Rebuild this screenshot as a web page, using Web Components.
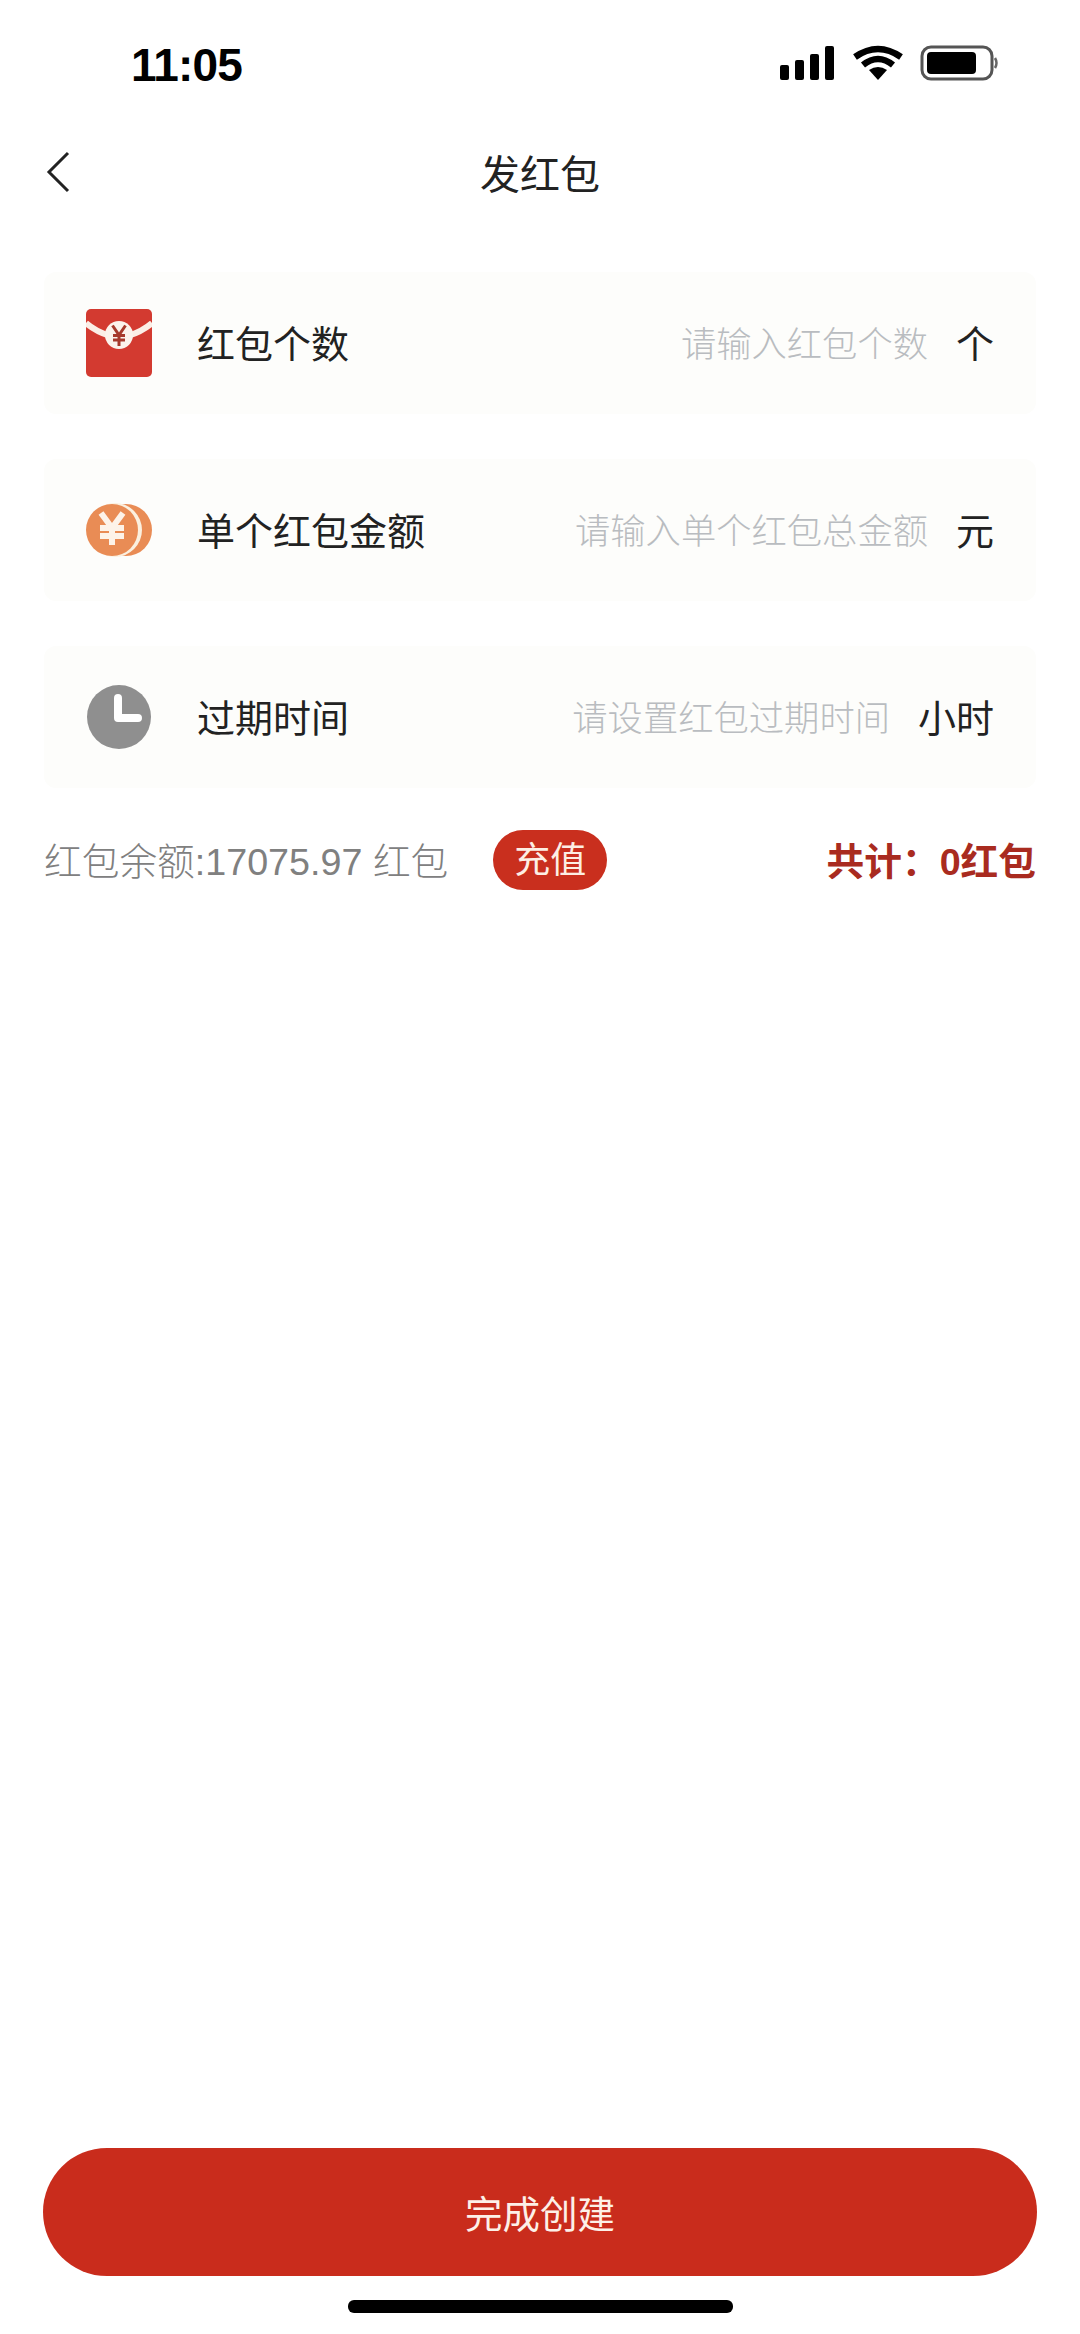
<!DOCTYPE html>
<html lang="zh">
<head>
<meta charset="utf-8">
<title>发红包</title>
<style>
    html, body {
        margin: 0;
        background: #fff;
        font-family: "Liberation Sans", "Noto Sans CJK SC", sans-serif;
    }
</style>
</head>
<body>
<send-page>
    <status-bar time="11:05" slot="top"></status-bar>
    <nav-bar slot="top">发红包</nav-bar>

    <form-row placeholder="请输入红包个数" unit="个">
        <svg slot="icon" width="66" height="68" viewBox="0 0 66 68">
            <rect width="66" height="68" rx="5" fill="#d33a30"/>
            <path d="M0 14 C8 21 15 24 24 27 M66 14 C58 21 51 24 42 27" fill="none" stroke="#fbeee6" stroke-width="6"/>
            <circle cx="33" cy="26" r="14" fill="#fbf3ec"/>
            <path d="M26.5 16.5 L33 26 L39.5 16.5 M33 26 V37 M27 26.5 H39 M27 31 H39" fill="none" stroke="#a63a2c" stroke-width="3"/>
        </svg>
        红包个数
    </form-row>
    <form-row placeholder="请输入单个红包总金额" unit="元">
        <svg slot="icon" width="66" height="54" viewBox="0 0 66 54">
            <circle cx="40" cy="27" r="26" fill="#e98c55"/>
            <circle cx="29" cy="27" r="27" fill="#fbf0df"/>
            <circle cx="26" cy="27" r="26" fill="#e98c55"/>
            <path d="M15 10 L26 25 L37 10 M26 25 V42 M14 25 H38 M14 33 H38" fill="none" stroke="#fdf3e9" stroke-width="6"/>
        </svg>
        单个红包金额
    </form-row>
    <form-row placeholder="请设置红包过期时间" unit="小时">
        <svg slot="icon" width="64" height="64" viewBox="0 0 64 64">
            <circle cx="32" cy="32" r="32" fill="#8f8f8f"/>
            <path d="M31 13 V33 H51" fill="none" stroke="#fff" stroke-width="8" stroke-linecap="round" stroke-linejoin="round"/>
        </svg>
        过期时间
    </form-row>

    <balance-row amount="红包余额:17075.97 红包" action="充值" total="共计：0红包"></balance-row>

    <submit-button slot="bottom">完成创建</submit-button>
    <home-indicator slot="bottom"></home-indicator>
</send-page>

<script>
(() => {

    const define = (name, html, init) => {
        customElements.define(name, class extends HTMLElement {
            constructor(){
                super()
                this.root = this.attachShadow({mode: 'open'})
                this.root.innerHTML = html
                if(init) init(this)
            }
        })
    }

    const setText = (el, id, attr) => {
        el.root.getElementById(id).textContent = el.getAttribute(attr) || ""
    }

    define("send-page", `
        <style>
            :host {
                display: flex;
                flex-direction: column;
                height: 2334px;
                box-sizing: border-box;
            }
            .content {
                flex: 1;
                display: flex;
                flex-direction: column;
                gap: 45px;
                padding: 60px 44px 0;
            }
            .bottom {
                display: flex;
                flex-direction: column;
                align-items: center;
            }
        </style>
        <slot name="top"></slot>
        <div class="content"><slot></slot></div>
        <div class="bottom"><slot name="bottom"></slot></div>
    `)

    define("status-bar", `
        <style>
            :host {
                display: flex;
                justify-content: space-between;
                align-items: center;
                height: 34px;
                padding: 46px 81px 52px 131px;
            }
            .time {
                font: bold 46px/34px "Liberation Sans", sans-serif;
                letter-spacing: -0.8px;
                color: #000;
                padding-top: 3px;
            }
            svg { display: block; }
        </style>
        <span class="time" id="time"></span>
        <svg width="220" height="36" viewBox="0 0 220 36">
            <g fill="#000">
                <rect x="1" y="20" width="9" height="15" rx="2"/>
                <rect x="16" y="15" width="9" height="20" rx="2"/>
                <rect x="31" y="9" width="9" height="26" rx="2"/>
                <rect x="46" y="1" width="9" height="34" rx="2"/>
                <path d="M99 35 L90 25 Q99 19 108 25 Z"/>
            </g>
            <path d="M76 12 Q99 -4 122 12 M84 20 Q99 8 114 20" fill="none" stroke="#000" stroke-width="6.5"/>
            <rect x="143" y="2" width="70" height="32" rx="9" fill="#fff" stroke="#555" stroke-width="3"/>
            <rect x="148" y="7" width="49" height="22" rx="4" fill="#000"/>
            <path d="M216 13 Q219 18 216 23" fill="none" stroke="#666" stroke-width="2.5"/>
        </svg>
    `, el => setText(el, "time", "time"))

    define("nav-bar", `
        <style>
            :host {
                display: block;
                position: relative;
                height: 80px;
                text-align: center;
                font: 400 40px/80px "Noto Sans CJK SC", sans-serif;
                color: #222;
            }
            svg {
                position: absolute;
                left: 46px;
                top: 19px;
            }
        </style>
        <svg width="24" height="42" viewBox="0 0 24 42">
            <path d="M22 2 L3 21 L22 40" fill="none" stroke="#222" stroke-width="3"/>
        </svg>
        <slot></slot>
    `)

    define("form-row", `
        <style>
            :host {
                display: flex;
                align-items: center;
                height: 142px;
                padding: 0 42px;
                background: #fdfdfb;
                border-radius: 12px;
                font: 400 38px "Noto Sans CJK SC", sans-serif;
                color: #222;
            }
            .icon {
                width: 66px;
                margin-right: 45px;
                display: flex;
                justify-content: center;
                flex: none;
            }
            .label { flex: 1; }
            .label, .placeholder, .unit { padding-bottom: 4px; }
            .placeholder {
                font-size: 35.3px;
                font-weight: 300;
                color: #b9bcc0;
                margin-right: 28px;
            }
        </style>
        <div class="icon"><slot name="icon"></slot></div>
        <div class="label"><slot></slot></div>
        <span class="placeholder" id="placeholder"></span>
        <span class="unit" id="unit"></span>
    `, el => {
        setText(el, "placeholder", "placeholder")
        setText(el, "unit", "unit")
    })

    define("balance-row", `
        <style>
            :host {
                display: flex;
                align-items: center;
                height: 60px;
                margin-top: -3px;
                font-family: "Liberation Sans", "Noto Sans CJK SC", sans-serif;
            }
            .amount {
                font-size: 37.7px;
                font-weight: 300;
                color: #80807f;
                padding-bottom: 4px;
            }
            .action {
                margin-left: 45px;
                width: 114px;
                height: 60px;
                border-radius: 30px;
                background: #c92f1e;
                color: #fdeee4;
                font-size: 36px;
                line-height: 62px;
                text-align: center;
            }
            .total {
                margin-left: auto;
                font-size: 37.7px;
                font-weight: 700;
                color: #a92b20;
                padding-bottom: 4px;
            }
        </style>
        <span class="amount" id="amount"></span>
        <span class="action" id="action"></span>
        <span class="total" id="total"></span>
    `, el => {
        setText(el, "amount", "amount")
        setText(el, "action", "action")
        setText(el, "total", "total")
    })

    define("submit-button", `
        <style>
            :host {
                display: block;
                width: 994px;
                height: 128px;
                border-radius: 64px;
                background: #c92c1c;
                color: #fdf0e8;
                text-align: center;
                font: 400 37.5px/128px "Noto Sans CJK SC", sans-serif;
            }
        </style>
        <slot></slot>
    `)

    define("home-indicator", `
        <style>
            :host {
                display: block;
                width: 385px;
                height: 13px;
                margin: 24px 0 21px;
                border-radius: 6px;
                background: #000;
            }
        </style>
    `)

})()
</script>
</body>
</html>
